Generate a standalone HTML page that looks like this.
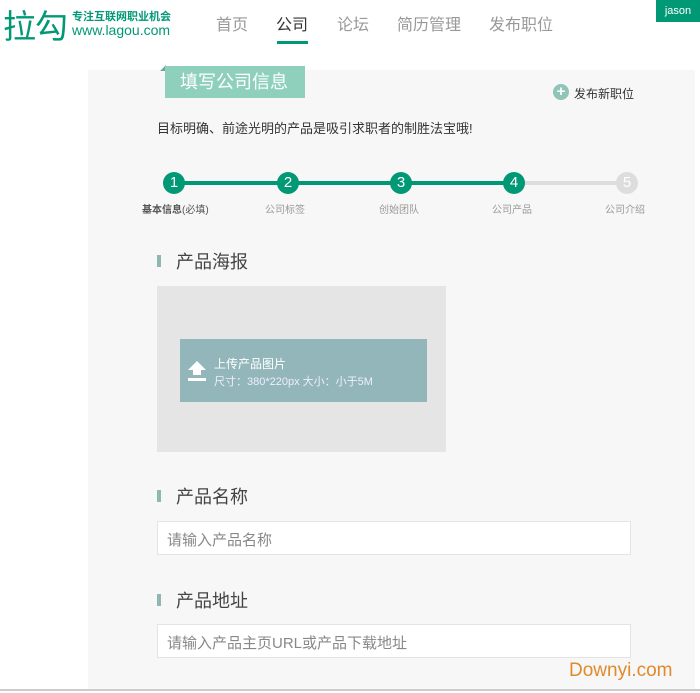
<!DOCTYPE html>
<html><head><meta charset="utf-8"><style>
*{margin:0;padding:0;box-sizing:border-box}
body{width:700px;height:693px;background:#fff;font-family:"Liberation Sans","Noto Sans CJK SC",sans-serif;position:relative;overflow:hidden}
.a{position:absolute}
.nav{font-size:16px;color:#999;top:11px}
.step{width:22px;height:22px;border-radius:50%;background:#019875;color:#fff;font-size:15px;text-align:center;line-height:22px;top:172px}
.lbl{font-size:10px;color:#999;top:201px}
.h{font-size:18px;color:#444}
.bar{width:4px;height:12px;background:#8fb6b0}
.inp{background:#fff;border:1px solid #e4e4e4;height:34px;width:474px;left:157px;font-size:15px;color:#888;padding:7px 9px}
</style></head><body>
<div class="a" style="left:3px;top:0px;font-size:33px;color:#019875;letter-spacing:-1px">拉勾</div>
<div class="a" style="left:72px;top:8px;font-size:11px;font-weight:bold;color:#019875">专注互联网职业机会</div>
<div class="a" style="left:72px;top:22px;font-size:14px;color:#019875">www.lagou.com</div>
<div class="a nav" style="left:216px">首页</div>
<div class="a nav" style="left:276px;color:#333">公司</div>
<div class="a" style="left:277px;top:41px;width:31px;height:3px;background:#019875"></div>
<div class="a nav" style="left:337px">论坛</div>
<div class="a nav" style="left:397px">简历管理</div>
<div class="a nav" style="left:489px">发布职位</div>
<div class="a" style="left:656px;top:0;width:44px;height:22px;background:#019875;color:#fff;font-size:11px;line-height:22px;text-align:center">jason</div>

<div class="a" style="left:88px;top:70px;width:607px;height:620px;background:#f7f7f7"></div>
<div class="a" style="left:0;top:689px;width:700px;height:2px;background:#ccc"></div>
<div class="a" style="left:160px;top:65px;width:0;height:0;border-left:6px solid transparent;border-bottom:6px solid #6aa89a"></div>
<div class="a" style="left:165px;top:66px;width:140px;height:32px;background:#8fd0bd;color:#fff;font-size:18px;line-height:32px;padding-left:15px">填写公司信息</div>
<div class="a" style="left:553px;top:84px;width:16px;height:16px;border-radius:50%;background:#8fc4b7;color:#fff;font-size:15px;line-height:16px;text-align:center;font-weight:bold">+</div>
<div class="a" style="left:574px;top:85px;font-size:12px;color:#333">发布新职位</div>
<div class="a" style="left:157px;top:118px;font-size:13px;color:#333">目标明确、前途光明的产品是吸引求职者的制胜法宝哦!</div>

<div class="a" style="left:174px;top:181px;width:340px;height:4px;background:#019875"></div>
<div class="a" style="left:514px;top:181px;width:113px;height:4px;background:#ddd"></div>
<div class="a step" style="left:163px">1</div>
<div class="a step" style="left:277px">2</div>
<div class="a step" style="left:390px">3</div>
<div class="a step" style="left:503px">4</div>
<div class="a step" style="left:616px;background:#ddd">5</div>
<div class="a lbl" style="left:142px;color:#555"><b>基本信息</b>(必填)</div>
<div class="a lbl" style="left:265px">公司标签</div>
<div class="a lbl" style="left:379px">创始团队</div>
<div class="a lbl" style="left:492px">公司产品</div>
<div class="a lbl" style="left:605px">公司介绍</div>

<div class="a bar" style="left:157px;top:255px"></div>
<div class="a h" style="left:176px;top:248px">产品海报</div>
<div class="a" style="left:157px;top:286px;width:289px;height:166px;background:#e5e5e5"></div>
<div class="a" style="left:180px;top:339px;width:247px;height:63px;background:#93b6ba"></div>
<svg class="a" style="left:187px;top:360px" width="20" height="22" viewBox="0 0 20 22"><path d="M10 1L1 10h5v5h8v-5h5z" fill="#fff"/><rect x="1" y="18" width="18" height="3" fill="#fff"/></svg>
<div class="a" style="left:214px;top:355px;font-size:12px;color:#fff">上传产品图片</div>
<div class="a" style="left:214px;top:373px;font-size:11px;color:#eef">尺寸：380*220px 大小：小于5M</div>

<div class="a bar" style="left:157px;top:490px"></div>
<div class="a h" style="left:176px;top:483px">产品名称</div>
<div class="a inp" style="top:521px">请输入产品名称</div>
<div class="a bar" style="left:157px;top:594px"></div>
<div class="a h" style="left:176px;top:587px">产品地址</div>
<div class="a inp" style="top:624px">请输入产品主页URL或产品下载地址</div>
<div class="a" style="left:569px;top:660px;font-size:19px;color:#e08a2c">Downyi.com</div>
</body></html>
